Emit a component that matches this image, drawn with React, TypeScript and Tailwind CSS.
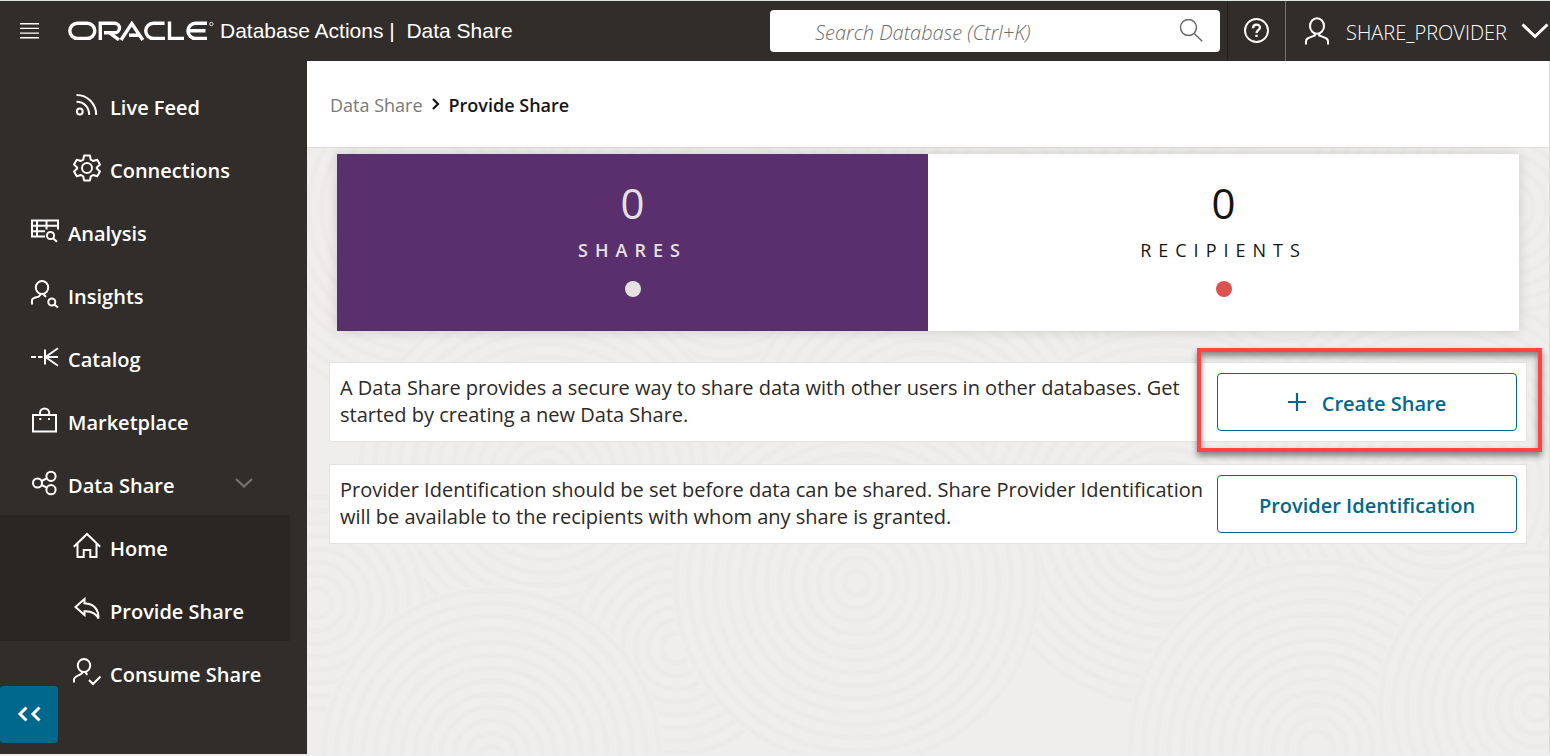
import React from "react";

type IconProps = { children: React.ReactNode; size?: string };

function Icon({ children, size = "h-7 w-7" }: IconProps) {
  return (
    <svg
      viewBox="0 0 28 28"
      className={`${size} shrink-0`}
      fill="none"
      stroke="currentColor"
      strokeWidth="2"
      aria-hidden="true"
    >
      {children}
    </svg>
  );
}

const icons = {
  feed: (
    <Icon>
      <circle cx="6.800" cy="20.500" r="2.900" />
      <path d="M3.500 10.700c7.500 0 12.700 5.700 12.700 13.200M3.500 4c11 0 19.700 8.700 19.700 19.900" />
    </Icon>
  ),
  gear: (
    <Icon>
      <circle cx="14" cy="14" r="5" />
      <path
        strokeLinejoin="round"
        d="M11.100 1.500h5.800l.900 4.200 2.300 1.300 4.100-1.300 2.800 4.900-3.200 2.800v1.200l3.200 2.800-2.800 4.900-4.100-1.300-2.300 1.300-.900 4.200h-5.800l-.900-4.200-2.300-1.300-4.100 1.300-2.800-4.900 3.200-2.800v-1.200l-3.200-2.800 2.800-4.900 4.100 1.300 2.300-1.300z"
      />
    </Icon>
  ),
  analysis: (
    <Icon>
      <path d="M14 19.500H1V3.500h26v9M1 8.700h26M1 14.200h13M6 3.500v16M15.500 3.500v9" />
      <circle cx="19.500" cy="18.500" r="3.600" />
      <path d="M22 21.300l4 3.500" />
    </Icon>
  ),
  insights: (
    <Icon>
      <ellipse cx="11" cy="7.500" rx="6.200" ry="6.500" />
      <path d="M1 24.500v-4.500c0-2 4.500-2.500 7-3.700l1.800-2M12.500 14.300l2.500 2.700" />
      <circle cx="20.800" cy="22" r="3.500" />
      <path d="M23.300 24.500l3.700 3" />
    </Icon>
  ),
  catalog: (
    <Icon>
      <path d="M0 14h5M7 14h4.500M14 6.500v15M27 5.200L14.500 14l12.500 8.800M14.500 14H27" />
    </Icon>
  ),
  market: (
    <Icon>
      <path d="M2 9h23v16.500H2zM9 9V7a4.600 4.600 0 0 1 9.200 0v2" />
      <path d="M8.300 13h2M17 13h2" />
    </Icon>
  ),
  share: (
    <Icon>
      <circle cx="6.500" cy="14" r="4.500" />
      <circle cx="20" cy="7.300" r="4.600" />
      <circle cx="20" cy="20.700" r="4.600" />
      <path d="M10.500 12l5.400-2.700M10.500 16l5.400 2.700" />
    </Icon>
  ),
  home: (
    <Icon>
      <path d="M.800 14.800L14 2l13.200 12.800M4.500 11.800v13.300h6.200v-7h6.600v7h6.200V11.800" />
    </Icon>
  ),
  reply: (
    <Icon>
      <path d="M2.500 12L11.500 4v4.300c8.500.500 14 4.500 14 15.200-2.500-5-6.500-7.500-14-7.200v3.800z" />
    </Icon>
  ),
  consume: (
    <Icon>
      <ellipse cx="11" cy="7.500" rx="6.200" ry="6.500" />
      <path d="M1 24.500v-3c0-3 4.500-3.800 7-5.500l1.800-1.800M12.500 14.300l1.800 2.500M16 22l4 4 7.500-7.500" />
    </Icon>
  ),
};

type NavItem = {
  label: string;
  icon: React.ReactNode;
  nested?: boolean;
  shaded?: boolean;
  expandable?: boolean;
};

const navItems: NavItem[] = [
  { label: "Live Feed", icon: icons.feed, nested: true },
  { label: "Connections", icon: icons.gear, nested: true },
  { label: "Analysis", icon: icons.analysis },
  { label: "Insights", icon: icons.insights },
  { label: "Catalog", icon: icons.catalog },
  { label: "Marketplace", icon: icons.market },
  { label: "Data Share", icon: icons.share, expandable: true },
  { label: "Home", icon: icons.home, nested: true, shaded: true },
  { label: "Provide Share", icon: icons.reply, nested: true, shaded: true },
  { label: "Consume Share", icon: icons.consume, nested: true },
];

function Logo() {
  return (
    <svg
      viewBox="0 0 146 20"
      className="h-5 w-[146px] shrink-0"
      fill="none"
      stroke="white"
      strokeWidth="3.400"
      role="img"
      aria-label="Oracle"
    >
      <rect x="1.800" y="2.200" width="25" height="15.200" rx="7.600" />
      <path d="M32.300 19V2.200h14.400a4.800 4.800 0 0 1 0 9.600H36M41.500 11.800l9.500 7" />
      <path d="M53 19L63.800 2.600l11 16.400M61 14.300h10.500" />
      <path d="M96.500 2.200H85.300a7.600 7.600 0 0 0 0 15.200H97" />
      <path d="M101.500.500v16.900h14.500" />
      <path d="M139 2.200h-11.500a7.600 7.600 0 0 0 0 15.200H139M120.500 9.800h17" />
      <circle cx="143.300" cy="3" r="1.700" strokeWidth=".8" />
    </svg>
  );
}

function Header() {
  return (
    <header className="flex h-[61px] items-stretch border-t border-[#dfe6df] bg-[#312d2a] text-white">
      <div className="flex flex-1 items-center">
        <button type="button" aria-label="Menu" className="ml-5 flex h-6 w-5 items-center">
          <svg viewBox="0 0 20 16" className="h-4 w-5" stroke="white" strokeWidth="1.400" aria-hidden="true">
            <path d="M0 .700h19M0 5.400h19M0 10.100h19M0 14.800h19" />
          </svg>
        </button>
        <div className="ml-7 flex items-center">
          <Logo />
          <h1 className="ml-[6px] font-['Liberation_Sans',Arial,sans-serif] text-[21px] leading-6 whitespace-pre">
            Database Actions |{"  "}Data Share
          </h1>
        </div>
      </div>
      <div className="flex items-center pr-[7px]">
        <div className="flex h-[42px] w-[450px] items-center rounded bg-white pr-[17px] pl-[45px]">
          <input
            type="search"
            aria-label="Search Database"
            placeholder="Search Database (Ctrl+K)"
            className="min-w-0 flex-1 bg-transparent pt-1 text-xl font-light text-black italic outline-none placeholder:text-[#6b6b6b]"
          />
          <svg viewBox="0 0 24 24" className="h-6 w-6" fill="none" stroke="#666" strokeWidth="1.400" aria-hidden="true">
            <circle cx="9.500" cy="8.500" r="8" />
            <path d="M15 14.300l8.200 8" />
          </svg>
        </div>
      </div>
      <button
        type="button"
        aria-label="Help"
        className="flex w-[59px] items-center justify-center border-r border-l border-r-[#76726f] border-l-[#24201e]"
      >
        <svg viewBox="0 0 26 26" className="h-[26px] w-[26px]" fill="none" stroke="white" strokeWidth="1.900" aria-hidden="true">
          <circle cx="12.500" cy="12.500" r="11.500" />
          <path strokeWidth="2.300" d="M9 10.200c0-4.800 7-4.500 7-.6 0 2.600-3.500 2.500-3.500 5.400M12.500 16.700v2.400" />
        </svg>
      </button>
      <button type="button" className="flex items-center pr-px pl-[18px]">
        <svg viewBox="0 0 26 28" className="h-7 w-[26px]" fill="none" stroke="white" strokeWidth="2" aria-hidden="true">
          <ellipse cx="13" cy="9" rx="7" ry="7.800" />
          <path d="M2 27.500v-3.200c0-3 3-3.600 8.800-5.800v-2.400M24 27.500v-3.200c0-3-3-3.600-8.800-5.800v-2.400" />
        </svg>
        <span className="ml-4 pt-1 text-xl font-light">SHARE_PROVIDER</span>
        <svg viewBox="0 0 28 16" className="ml-[14px] h-4 w-7" fill="none" stroke="white" strokeWidth="3" aria-hidden="true">
          <path d="M1.500 1.500L14 13.500l12.500-12" />
        </svg>
      </button>
    </header>
  );
}

function Sidebar() {
  return (
    <aside className="relative w-[307px] shrink-0 bg-[#312d2a] pt-[13px] pb-[50px] text-white">
      <nav aria-label="Data Studio">
        <ul className="mr-[17px]">
          {navItems.map((item) => (
            <li key={item.label} className={item.shaded ? "bg-[#2a2623]" : ""}>
              <a
                href="#"
                className={`flex h-[63px] items-center gap-[9px] pr-9 pb-[2px] text-[20px] leading-7 font-semibold ${
                  item.nested ? "pl-[73px]" : "pl-[31px]"
                }`}
              >
                {item.icon}
                <span className="flex-1 pt-[6px] whitespace-nowrap">{item.label}</span>
                {item.expandable && (
                  <svg viewBox="0 0 20 12" className="h-3 w-5" fill="none" stroke="#77736f" strokeWidth="2.200" aria-hidden="true">
                    <path d="M2 2l8 7.500L18 2" />
                  </svg>
                )}
              </a>
            </li>
          ))}
        </ul>
      </nav>
      <button
        type="button"
        aria-label="Collapse navigation"
        className="absolute bottom-[11px] left-0 flex h-[57px] w-[58px] items-center justify-center rounded bg-[#00688c] pb-[2px]"
      >
        <svg viewBox="0 0 24 16" className="h-4 w-6" fill="none" stroke="white" strokeWidth="3" aria-hidden="true">
          <path d="M9.500 1.500L3 8l6.500 6.500M22.500 1.500L16 8l6.500 6.500" />
        </svg>
      </button>
    </aside>
  );
}

type Swirl = { x: number; y: number; r: number };

const swirls: Swirl[] = [
  { x: 120, y: 60, r: 200 },
  { x: 420, y: 110, r: 210 },
  { x: 700, y: 40, r: 200 },
  { x: 980, y: 120, r: 220 },
  { x: 1200, y: 60, r: 200 },
  { x: 240, y: 330, r: 190 },
  { x: 620, y: 300, r: 190 },
  { x: 860, y: 370, r: 190 },
  { x: 1130, y: 340, r: 200 },
  { x: 10, y: 455, r: 110 },
  { x: 370, y: 500, r: 110 },
  { x: 1010, y: 600, r: 190 },
  { x: 1230, y: 560, r: 160 },
  { x: 550, y: 435, r: 185 },
  { x: 185, y: 610, r: 172 },
];

function Texture() {
  return (
    <svg
      viewBox="0 0 1243 606"
      preserveAspectRatio="xMidYMid slice"
      className="absolute inset-0 h-full w-full"
      aria-hidden="true"
    >
      {swirls.map((s) => (
        <g key={`${s.x}-${s.y}`} fill="none" stroke="#ecebe9" strokeWidth="5">
          <circle cx={s.x} cy={s.y} r={s.r} fill="#efeeec" stroke="none" />
          {Array.from({ length: Math.floor(s.r / 13) }, (_, i) => (
            <circle key={i} cx={s.x} cy={s.y} r={s.r - i * 13 - 4} />
          ))}
        </g>
      ))}
    </svg>
  );
}

function StatTile({ label, active }: { label: string; active?: boolean }) {
  return (
    <button
      type="button"
      className={`flex flex-1 flex-col items-center pt-[22px] pb-[34px] ${
        active ? "bg-[#59306d] text-[#e5e1de]" : "bg-white text-[#161513]"
      }`}
    >
      <span className="text-[42px] leading-[54px]">0</span>
      <span className={`mt-[6px] text-lg leading-7 tracking-[7px] ${active ? "font-semibold" : "font-normal"}`}>
        {label}
      </span>
      <span className={`mt-[17px] h-4 w-4 rounded-full ${active ? "bg-[#e5e1de]" : "bg-[#d9534f]"}`} />
    </button>
  );
}

const actionButton =
  "flex h-[58px] w-[300px] shrink-0 items-center justify-center rounded border border-[#00688c] bg-white text-[20px] font-semibold text-[#00688c]";

function ActionCard({ text, children }: { text: string; children: React.ReactNode }) {
  return (
    <section className="flex items-start gap-2 border border-[#e4e3e2] bg-white py-[10px] pr-[9px] pl-[10px] text-[#2b2927]">
      <p className="flex-1 pt-px text-[20px] leading-[27px]">{text}</p>
      {children}
    </section>
  );
}

export default function App() {
  return (
    <div className="flex min-h-screen flex-col bg-white font-['Open_Sans','Noto_Sans',sans-serif]">
      <Header />
      <div className="flex flex-1 border-b-2 border-[#eeedee]">
        <Sidebar />
        <main className="flex min-w-0 flex-1 flex-col border-r border-[#dcdbda]">
          <nav
            aria-label="Breadcrumb"
            className="flex h-[87px] items-center border-b border-[#dddcdb] bg-white pt-[2px] pl-[23px] text-lg text-[#161513]"
          >
            <a href="#" className="text-[#7a7876]">
              Data Share
            </a>
            <svg viewBox="0 0 10 14" className="mx-2 h-[14px] w-[10px]" fill="none" stroke="#161513" strokeWidth="2.200" aria-hidden="true">
              <path d="M2 1l5 5-5 5" />
            </svg>
            <span aria-current="page" className="font-semibold">
              Provide Share
            </span>
          </nav>
          <div className="relative flex-1 bg-[#efeeec] px-[22px] pt-[6px]">
            <Texture />
            <div className="relative">
              <div className="mx-2 flex shadow-[0_0_12px_rgba(0,0,0,0.14)]">
                <StatTile label="SHARES" active />
                <StatTile label="RECIPIENTS" />
              </div>
              <div className="mt-[31px] flex flex-col gap-[22px]">
                <ActionCard text="A Data Share provides a secure way to share data with other users in other databases. Get started by creating a new Data Share.">
                  <div className="relative">
                    <button type="button" className={actionButton}>
                      <svg viewBox="0 0 18 18" className="mr-4 h-[18px] w-[18px]" stroke="currentColor" strokeWidth="2.200" aria-hidden="true">
                        <path d="M9 0v18M0 9h18" />
                      </svg>
                      <span className="pt-1">Create Share</span>
                    </button>
                    <div className="pointer-events-none absolute -top-[25px] -right-[25px] -bottom-[21px] -left-5 border-4 border-[#ff4343] shadow-[0_4px_6px_rgba(0,0,0,0.45),inset_0_4px_6px_rgba(0,0,0,0.45)]" />
                  </div>
                </ActionCard>
                <ActionCard text="Provider Identification should be set before data can be shared. Share Provider Identification will be available to the recipients with whom any share is granted.">
                  <button type="button" className={actionButton}>
                    <span className="pt-1">Provider Identification</span>
                  </button>
                </ActionCard>
              </div>
            </div>
          </div>
        </main>
      </div>
    </div>
  );
}
